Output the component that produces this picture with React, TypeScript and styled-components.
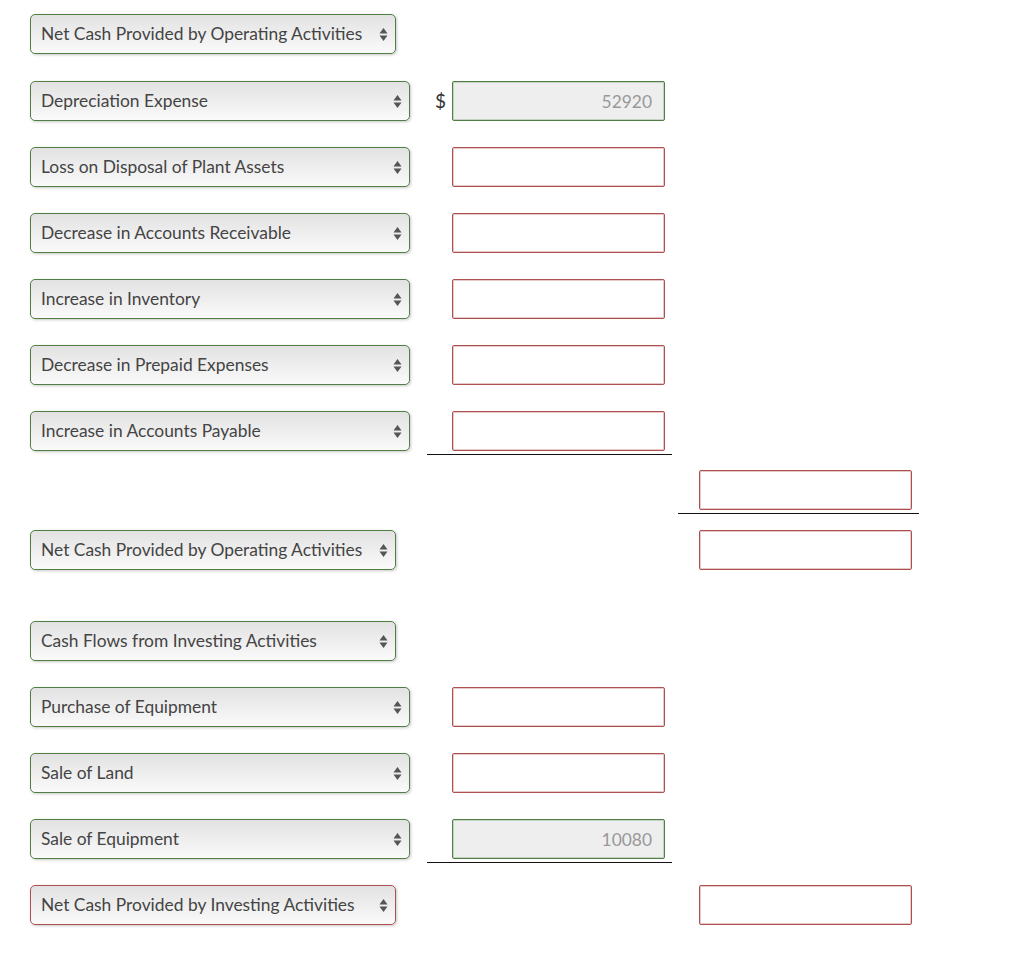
import styled, { createGlobalStyle } from 'styled-components';

type Tone = 'ok' | 'bad';

interface Line {
  label?: string;
  wide?: boolean;
  dollar?: boolean;
  first?: { value?: string; tone: Tone; underline?: boolean };
  second?: { tone: Tone; underline?: boolean };
  gap: number;
}

const GREEN = '#4f7f43';
const RED = '#ad5050';

const GlobalStyle = createGlobalStyle`
  body {
    margin: 0;
    background: #ffffff;
    font-family: Lato, "Open Sans", "Liberation Sans", sans-serif;
  }
`;

const Page = styled.div`
  display: flex;
  flex-direction: column;
  padding: 0 0 30px 30px;
`;

const Row = styled.div<{ $gap: number }>`
  display: grid;
  grid-template-columns: 397px 25px 213px 34px 213px;
  align-items: center;
  height: 40px;
  margin-top: ${({ $gap }) => $gap}px;
`;

const SelectWrap = styled.div<{ $wide?: boolean }>`
  display: grid;
  align-items: center;
  width: ${({ $wide }) => ($wide ? 380 : 366)}px;
  height: 40px;
`;

const Select = styled.select<{ $tone: Tone }>`
  grid-area: 1 / 1;
  appearance: none;
  width: 100%;
  height: 40px;
  padding: 0 28px 1px 10px;
  border: 1px solid ${({ $tone }) => ($tone === 'bad' ? RED : GREEN)};
  border-radius: 5px;
  background: linear-gradient(#e2e2e2, #fafafa);
  box-shadow: 1px 1px 3px rgba(0, 0, 0, 0.22);
  color: #444;
  font-family: Lato, "Open Sans", "Liberation Sans", sans-serif;
  font-size: 17.4px;
  outline: none;
`;

const Arrows = styled.svg`
  grid-area: 1 / 1;
  justify-self: end;
  margin-right: 8px;
  pointer-events: none;
`;

const Dollar = styled.span`
  justify-self: center;
  margin-left: 2px;
  margin-bottom: 2px;
  color: #333;
  font-size: 19px;
`;

const Cell = styled.div<{ $underline?: 'first' | 'second' }>`
  position: relative;
  height: 40px;

  ${({ $underline }) =>
    $underline &&
    `
    &::after {
      content: '';
      position: absolute;
      left: ${$underline === 'first' ? -25 : -21}px;
      right: -7px;
      bottom: -4px;
      height: 1.5px;
      background: #111;
    }
  `}
`;

const Amount = styled.input<{ $tone: Tone; $filled?: boolean }>`
  box-sizing: border-box;
  width: 213px;
  height: 40px;
  padding: 0 12px;
  border: 1px solid ${({ $tone }) => ($tone === 'bad' ? RED : GREEN)};
  border-radius: 2px;
  box-shadow: inset 0 0 0 1px
    ${({ $tone }) => ($tone === 'bad' ? 'rgba(173, 80, 80, 0.3)' : 'rgba(79, 127, 67, 0.25)')};
  background: ${({ $filled }) => ($filled ? '#eeeeee' : '#ffffff')};
  color: #999;
  font-family: Lato, "Open Sans", "Liberation Sans", sans-serif;
  font-size: 17.4px;
  text-align: right;
  outline: none;
`;

const lines: Line[] = [
  { label: 'Net Cash Provided by Operating Activities', gap: 14 },
  {
    label: 'Depreciation Expense',
    wide: true,
    dollar: true,
    first: { value: '52920', tone: 'ok' },
    gap: 27
  },
  { label: 'Loss on Disposal of Plant Assets', wide: true, first: { tone: 'bad' }, gap: 26 },
  { label: 'Decrease in Accounts Receivable', wide: true, first: { tone: 'bad' }, gap: 26 },
  { label: 'Increase in Inventory', wide: true, first: { tone: 'bad' }, gap: 26 },
  { label: 'Decrease in Prepaid Expenses', wide: true, first: { tone: 'bad' }, gap: 26 },
  {
    label: 'Increase in Accounts Payable',
    wide: true,
    first: { tone: 'bad', underline: true },
    gap: 26
  },
  { second: { tone: 'bad', underline: true }, gap: 19 },
  { label: 'Net Cash Provided by Operating Activities', second: { tone: 'bad' }, gap: 20 },
  { label: 'Cash Flows from Investing Activities', gap: 51 },
  { label: 'Purchase of Equipment', wide: true, first: { tone: 'bad' }, gap: 26 },
  { label: 'Sale of Land', wide: true, first: { tone: 'bad' }, gap: 26 },
  {
    label: 'Sale of Equipment',
    wide: true,
    first: { value: '10080', tone: 'ok', underline: true },
    gap: 26
  },
  {
    label: 'Net Cash Provided by Investing Activities',
    second: { tone: 'bad' },
    gap: 26
  }
];

function ArrowIcon() {
  return (
    <Arrows width="9" height="15" viewBox="0 0 9 15">
      <path d="M4.5 1 L8.5 6.5 L0.5 6.5 Z" fill="#555" />
      <path d="M4.5 14 L8.5 8.5 L0.5 8.5 Z" fill="#555" />
    </Arrows>
  );
}

function App() {
  return (
    <>
      <GlobalStyle />
      <Page>
        {lines.map((line, i) => (
          <Row key={i} $gap={line.gap}>
            <div>
              {line.label && (
                <SelectWrap $wide={line.wide}>
                  <Select
                    $tone={i === lines.length - 1 ? 'bad' : 'ok'}
                    defaultValue={line.label}
                  >
                    <option>{line.label}</option>
                  </Select>
                  <ArrowIcon />
                </SelectWrap>
              )}
            </div>
            {line.dollar ? <Dollar>$</Dollar> : <span />}
            {line.first ? (
              <Cell $underline={line.first.underline ? 'first' : undefined}>
                <Amount
                  $tone={line.first.tone}
                  $filled={!!line.first.value}
                  defaultValue={line.first.value}
                  readOnly={!!line.first.value}
                />
              </Cell>
            ) : (
              <span />
            )}
            <span />
            {line.second ? (
              <Cell $underline={line.second.underline ? 'second' : undefined}>
                <Amount $tone={line.second.tone} />
              </Cell>
            ) : (
              <span />
            )}
          </Row>
        ))}
      </Page>
    </>
  );
}

export default App;
